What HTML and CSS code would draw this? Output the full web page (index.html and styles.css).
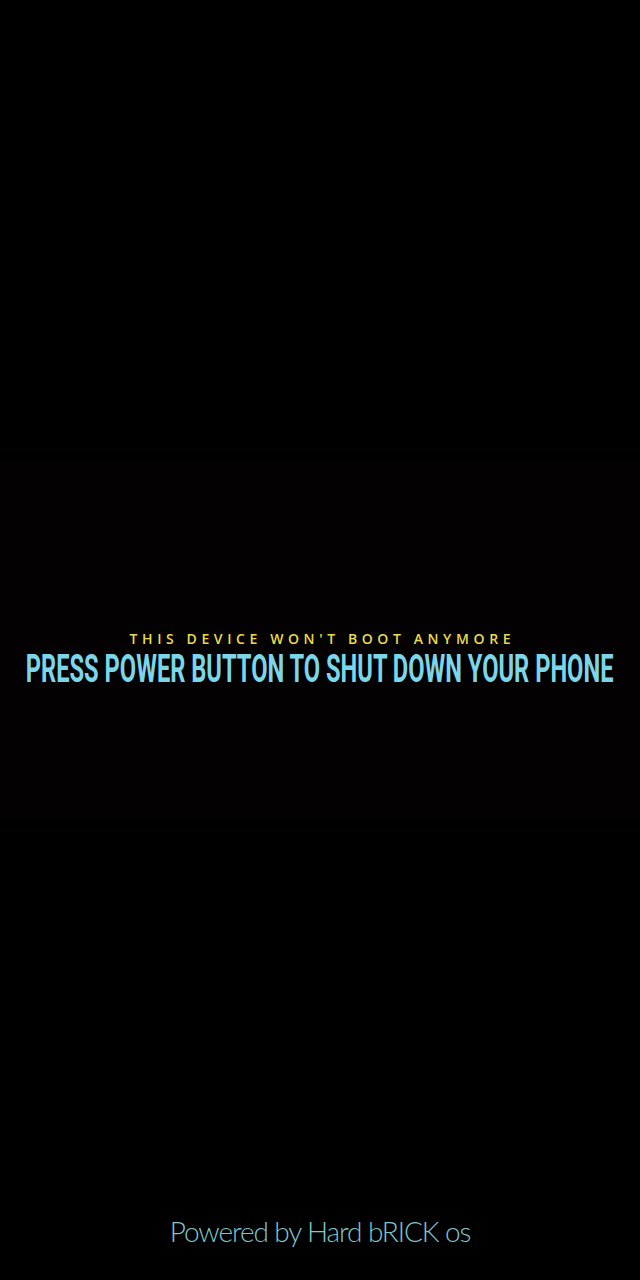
FILE: index.html
```html
<!DOCTYPE html>
<html>
<head>
<meta charset="utf-8">
<link rel="stylesheet" href="styles.css">
</head>
<body>
<div class="screen">
  <div class="panel">
    <div class="subtitle">THIS DEVICE WON'T BOOT ANYMORE</div>
    <div class="title">PRESS POWER BUTTON TO SHUT DOWN YOUR PHONE</div>
  </div>
  <div class="footer">Powered by Hard bRICK os</div>
</div>
</body>
</html>
```
FILE: styles.css
```css
html, body {
  margin: 0;
  padding: 0;
  background: #000;
}
.screen {
  width: 640px;
  height: 1280px;
  display: flex;
  flex-direction: column;
  background: #000;
  overflow: hidden;
}
.panel {
  margin-top: 460px;
  height: 360px;
  background: #030101;
  display: flex;
  flex-direction: column;
  align-items: center;
  padding-top: 172px;
  box-sizing: border-box;
}
.subtitle {
  font-family: "Open Sans", "Liberation Sans", sans-serif;
  font-weight: 600;
  font-size: 14px;
  letter-spacing: 4.6px;
  padding-left: 4.6px;
  color: #e9dc4c;
  line-height: 14px;
  white-space: nowrap;
}
.title {
  margin-top: 3px;
  font-family: "Roboto", "Liberation Sans", sans-serif;
  font-weight: 700;
  font-size: 38px;
  line-height: 40px;
  color: #7ad6e8;
  white-space: nowrap;
  transform: scaleX(0.623);
}
.footer {
  margin-top: auto;
  margin-bottom: 32px;
  text-align: center;
  font-family: "Lato", "Liberation Sans", sans-serif;
  font-weight: 300;
  font-size: 28px;
  letter-spacing: -1.1px;
  color: #80c6cc;
  line-height: 34px;
}
```
